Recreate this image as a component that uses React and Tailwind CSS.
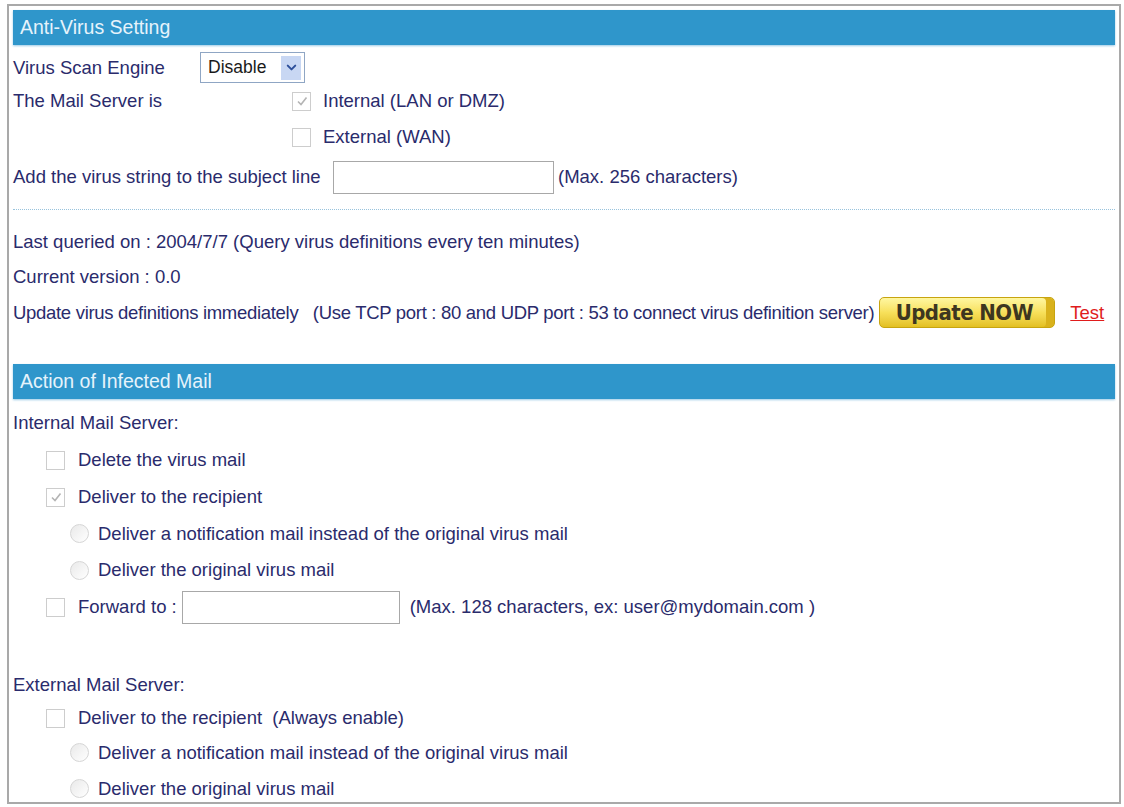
import React from "react";
import { ChevronDown } from "lucide-react";

const text = "text-[18.5px] text-[#2a2b6c]";

function Box({ checked }) {
  return (
    <span className="inline-flex h-[19px] w-[19px] shrink-0 items-center justify-center border border-[#cdcdcd] bg-white">
      {checked ? (
        <svg viewBox="0 0 12 12" className="h-[12px] w-[12px]">
          <path d="M2 6.5 L5 9.5 L10.5 2.5" fill="none" stroke="#b4b4b4" strokeWidth="1.6" />
        </svg>
      ) : null}
    </span>
  );
}

function Radio() {
  return (
    <span className="inline-block h-[19px] w-[19px] shrink-0 rounded-full border border-[#d6d6d6] bg-gradient-to-br from-[#e9e9e9] to-white" />
  );
}

function Bar({ title }) {
  return (
    <div className="flex h-[35px] items-center bg-[#2f96cb] pl-[7px] shadow-[0_1px_2px_#9ccbe6]">
      <span className="text-[19.5px] text-[#e6f3fb]">{title}</span>
    </div>
  );
}

function Row({ h, className = "", children }) {
  return (
    <div className={`flex items-center whitespace-nowrap ${text} ${className}`} style={{ height: h }}>
      {children}
    </div>
  );
}

export default function App() {
  return (
    <div className="min-h-[807px] bg-white pl-[7px] pt-[4px] font-['Liberation_Sans',Arial,sans-serif]">
      <div className="h-[800px] w-[1114px] overflow-hidden border-2 border-[#a9a9a9] px-[4px] pt-[4px]">
        <Bar title="Anti-Virus Setting" />

        <Row h={40} className="pt-[5px]">
          <span className="w-[187px]">Virus Scan Engine</span>
          <div className="flex h-[31px] w-[105px] items-center justify-between border border-[#8fa6c4] bg-white pl-[7px] pr-[3px]">
            <span className="text-[17.5px] text-[#1a1a1a]">Disable</span>
            <span className="flex h-[24px] w-[20px] items-center justify-center bg-[#c8d7f3]">
              <ChevronDown size={15} strokeWidth={3.2} color="#2d4f9a" />
            </span>
          </div>
        </Row>

        <Row h={32}>
          <span className="w-[279px]">The Mail Server is</span>
          <Box checked />
          <span className="ml-[12px]">Internal (LAN or DMZ)</span>
        </Row>

        <Row h={40}>
          <span className="w-[279px]" />
          <Box />
          <span className="ml-[12px]">External (WAN)</span>
        </Row>

        <Row h={40}>
          <span className="w-[320px]">Add the virus string to the subject line</span>
          <span className="h-[33px] w-[221px] border border-[#a8a8a8] bg-white" />
          <span className="ml-[4px]">(Max. 256 characters)</span>
        </Row>

        <div className="mt-[12px] border-t border-dotted border-[#98c3dd]" />

        <Row h={35} className="mt-[14px]">
          Last queried on : 2004/7/7 (Query virus definitions every ten minutes)
        </Row>
        <Row h={35}>Current version : 0.0</Row>
        <Row h={37}>
          <span className="tracking-[-0.3px]">
            Update virus definitions immediately&nbsp;&nbsp;&nbsp;(Use TCP port : 80 and UDP port : 53 to connect virus definition server)
          </span>
          <span className="ml-[5px] flex h-[31px] w-[176px] items-center justify-center rounded-[5px] border border-[#c7a410] bg-gradient-to-b from-[#fff7a0] via-[#f7e05a] to-[#e3c020] shadow-[inset_-8px_0_0_#d9b21c]">
            <span className="pr-[6px] font-['DejaVu_Sans_Condensed','DejaVu_Sans',sans-serif] text-[22px] font-bold tracking-tight text-[#3d3620] [font-stretch:condensed]">
              Update NOW
            </span>
          </span>
          <span className="ml-[15px] text-[#e01c1c] underline">Test</span>
        </Row>

        <div className="mt-[33px]">
          <Bar title="Action of Infected Mail" />
        </div>

        <Row h={37} className="mt-[5px]">Internal Mail Server:</Row>
        <Row h={38} className="pl-[33px]">
          <Box />
          <span className="ml-[13px]">Delete the virus mail</span>
        </Row>
        <Row h={36} className="pl-[33px]">
          <Box checked />
          <span className="ml-[13px]">Deliver to the recipient</span>
        </Row>
        <Row h={37} className="pl-[57px]">
          <Radio />
          <span className="ml-[9px]">Deliver a notification mail instead of the original virus mail</span>
        </Row>
        <Row h={36} className="pl-[57px]">
          <Radio />
          <span className="ml-[9px]">Deliver the original virus mail</span>
        </Row>
        <Row h={38} className="pl-[33px]">
          <Box />
          <span className="ml-[13px]">Forward to :</span>
          <span className="ml-[5px] h-[33px] w-[218px] border border-[#a8a8a8] bg-white" />
          <span className="ml-[10px]">(Max. 128 characters, ex: user@mydomain.com )</span>
        </Row>

        <Row h={34} className="mt-[42px]">External Mail Server:</Row>
        <Row h={32} className="pl-[33px]">
          <Box />
          <span className="ml-[13px]">Deliver to the recipient&nbsp;&nbsp;(Always enable)</span>
        </Row>
        <Row h={37} className="pl-[57px]">
          <Radio />
          <span className="ml-[9px]">Deliver a notification mail instead of the original virus mail</span>
        </Row>
        <Row h={35} className="pl-[57px]">
          <Radio />
          <span className="ml-[9px]">Deliver the original virus mail</span>
        </Row>
      </div>
    </div>
  );
}
